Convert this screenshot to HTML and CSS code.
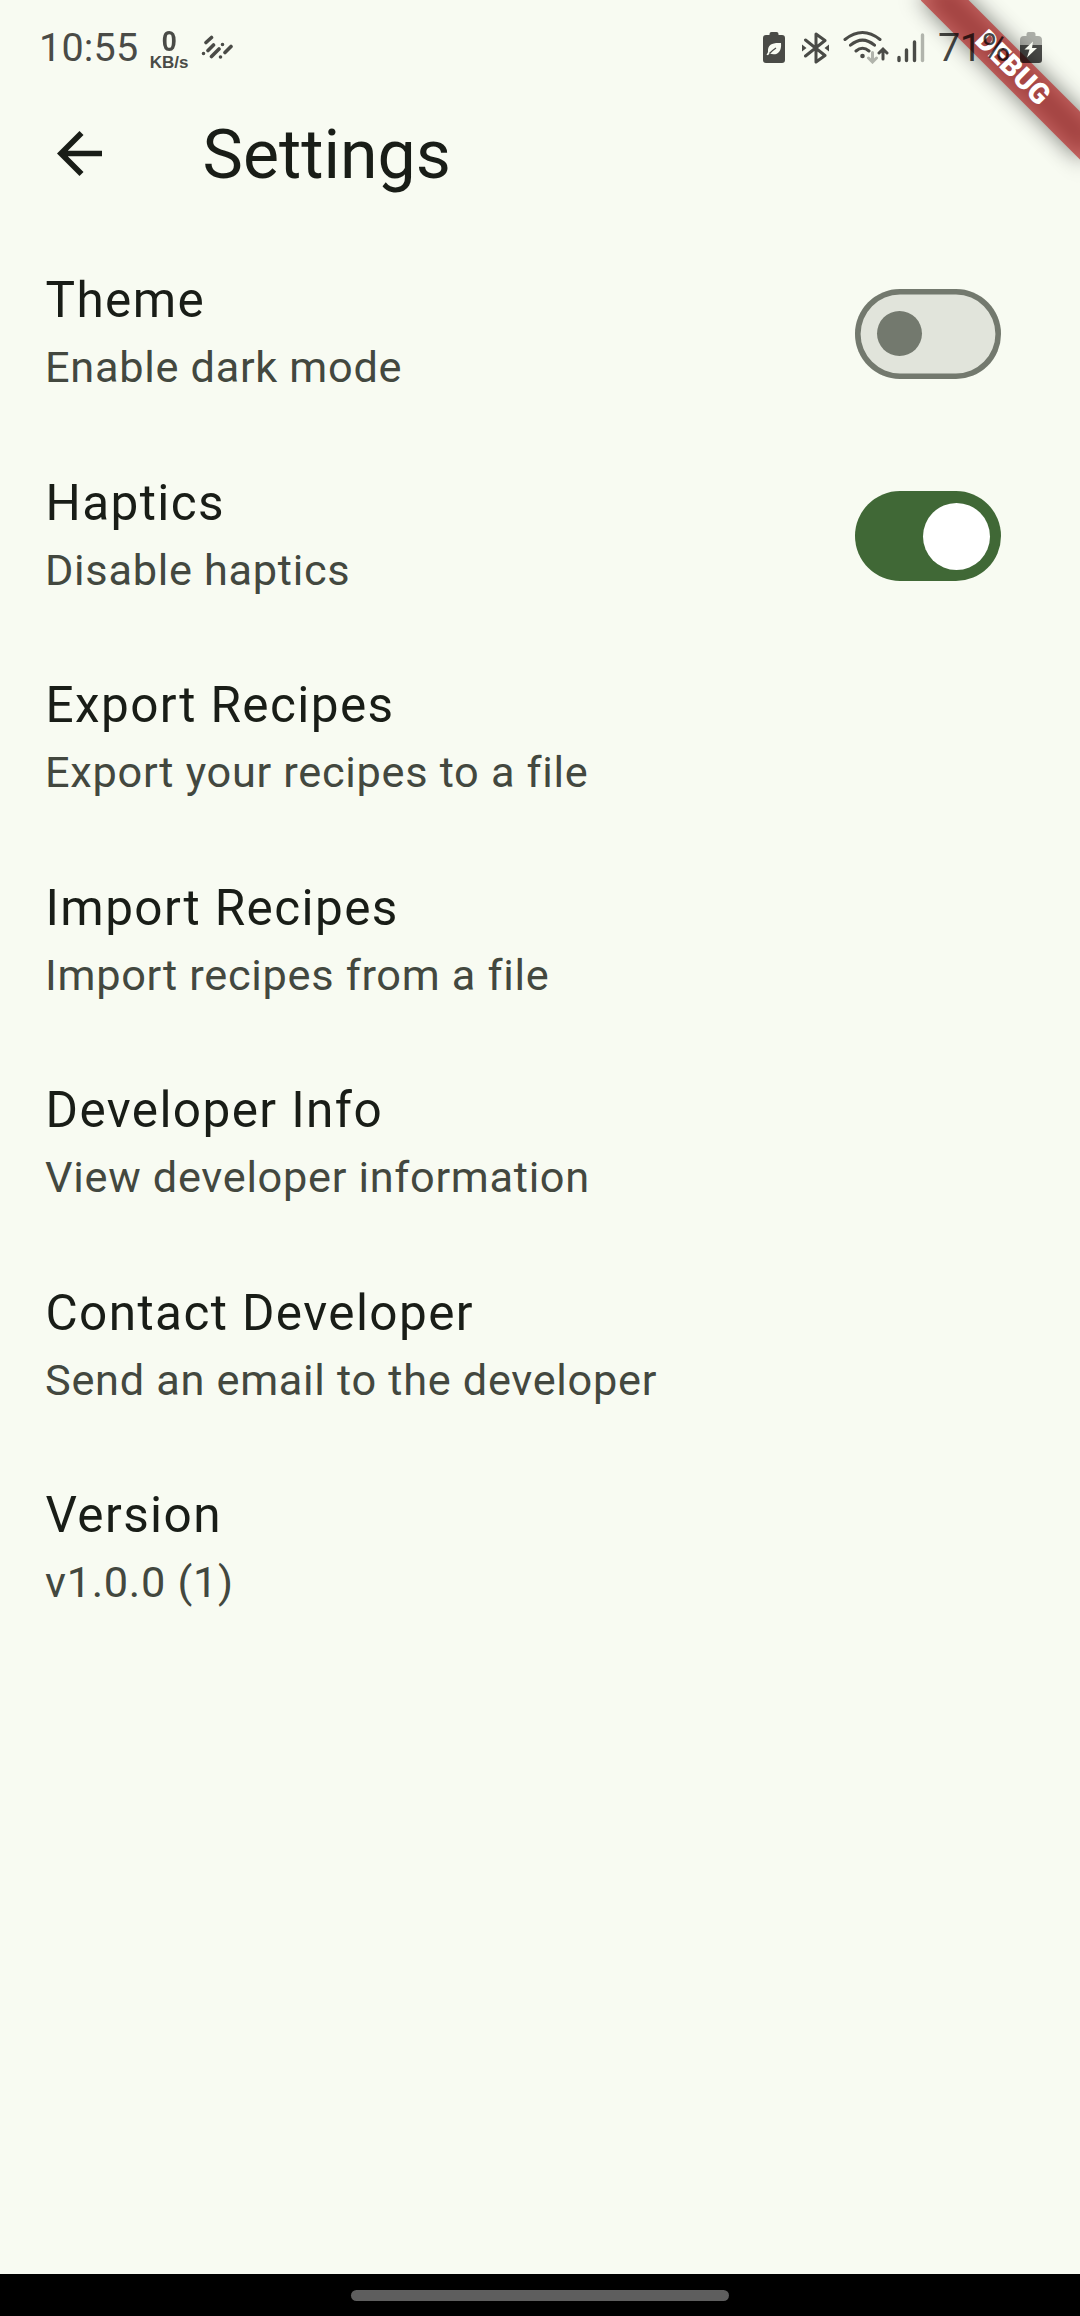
FILE: index.html
```html
<!DOCTYPE html>
<html lang="en">
<head>
<meta charset="utf-8">
<title>Settings</title>
<link rel="stylesheet" href="styles.css">
</head>
<body>
<div class="screen">
  <div class="debug-clip">
    <div class="debug-shadow"></div>
    <div class="debug-ribbon">DEBUG</div>
  </div>

  <header class="status-bar">
    <div class="status-left">
      <span class="clock">10:55</span>
      <span class="net-speed"><span class="net-value">0</span><span class="net-unit">KB/s</span></span>
      <svg class="icon-stripes" width="32" height="26" viewBox="0 0 32 26" fill="none" stroke="#4a4b47" stroke-width="3.600" stroke-linecap="round">
        <path d="M5 7.500 10.500 2.500M7 15.500 12.500 10M10.500 21.500 18 14M24 17.500 30 11.500M2.500 18.500h.01M21.500 9.500h.01M19.500 22h.01"/>
      </svg>
    </div>
    <div class="status-right">
      <svg class="icon-saver" width="22" height="31" viewBox="0 0 22 31">
        <path fill="#4a4b47" d="M6.500 3V2Q6.500 0 8.500 0h5q2 0 2 2v1H19q3 0 3 3v22q0 3-3 3H3q-3 0-3-3V6q0-3 3-3z"/>
        <path fill="#f8fbf2" d="M18 11C10 10.500 4.500 12 5 19.500c0 1.500-1 2-1.500 3.200l1.500.6 1.500-1.800C13 24 19 21 18 11z"/>
        <path fill="none" stroke="#4a4b47" stroke-width="1.300" d="M6.500 21.500Q8.500 19 13 16"/>
      </svg>
      <svg class="icon-bluetooth" width="27" height="32" viewBox="0 0 27 32">
        <path fill="none" stroke="#4a4b47" stroke-width="3" stroke-linejoin="round" stroke-linecap="round" d="M3.500 8 23 23.500 14 30V2l9 6.500L3.500 24"/>
        <path fill="#4a4b47" d="M0 12.500 4.500 16 0 19.500zM27 12.500 22.500 16 27 19.500z"/>
      </svg>
      <svg class="icon-wifi" width="46" height="34" viewBox="0 0 46 34" fill="none" stroke-linecap="round" stroke-width="3" stroke="#4a4b47">
        <path d="M2 9.500Q19.500-4.500 37 9.500M7.500 15.200Q19.500 5 31.500 15.200M13 21Q19.500 15.500 26 21"/>
        <circle cx="19.500" cy="26" r="2.300" fill="#4a4b47" stroke="none"/>
        <path stroke="#b1b4ac" d="M29.500 22.500v9M25.500 28l4 4 4-4"/>
        <path d="M40 29v-9M36 23l4-4 4 4"/>
      </svg>
      <svg class="icon-signal" width="28" height="30" viewBox="0 0 28 30" fill="none" stroke-linecap="round" stroke-width="3.400" stroke="#4a4b47">
        <path d="M2 24.500v3M9.500 17v10.500M17.500 9v18.500"/><path stroke="#b1b4ac" d="M25.500 2v25.500"/>
      </svg>
      <span class="battery-level">71%</span>
      <svg class="icon-battery" width="22" height="32" viewBox="0 0 22 32">
        <path fill="#000" fill-opacity=".3" d="M6.500 4V2Q6.500 0 8.500 0h5q2 0 2 2v2H18q4 0 4 4v5H0V8q0-4 4-4z"/>
        <path fill="#000" fill-opacity=".7" d="M0 13h22v15q0 3-3 3H3q-3 0-3-3z"/>
        <path fill="#f8fbf2" d="M13 9.500 4.500 17.500h5L7 25.500l10-9.500h-5z"/>
      </svg>
    </div>
  </header>

  <div class="app-bar">
    <svg class="back" width="45" height="45" viewBox="160 -800 640 640"><path fill="#191d17" d="m313-440 224 224-57 56-320-320 320-320 57 56-224 224h487v80H313Z"/></svg>
    <h1 class="page-title">Settings</h1>
  </div>

  <main class="list">
    <div class="row"><div class="texts"><div class="title">Theme</div><div class="sub">Enable dark mode</div></div><div class="switch off"><span class="thumb"></span></div></div>
    <div class="row"><div class="texts"><div class="title">Haptics</div><div class="sub">Disable haptics</div></div><div class="switch on"><span class="thumb"></span></div></div>
    <div class="row"><div class="texts"><div class="title">Export Recipes</div><div class="sub">Export your recipes to a file</div></div></div>
    <div class="row"><div class="texts"><div class="title">Import Recipes</div><div class="sub">Import recipes from a file</div></div></div>
    <div class="row"><div class="texts"><div class="title">Developer Info</div><div class="sub">View developer information</div></div></div>
    <div class="row"><div class="texts"><div class="title">Contact Developer</div><div class="sub">Send an email to the developer</div></div></div>
    <div class="row"><div class="texts"><div class="title">Version</div><div class="sub">v1.0.0 (1)</div></div></div>
  </main>

  <footer class="nav-bar"><span class="handle"></span></footer>
</div>
</body>
</html>
```

FILE: styles.css
```css
* { box-sizing: border-box; }
body { margin: 0; background: #f8fbf2; font-family: Roboto, "Liberation Sans", sans-serif; }
.screen { position: relative; width: 1080px; height: 2316px; overflow: hidden; display: flex; flex-direction: column; color: #191d17; }

.status-bar { position: relative; z-index: 2; height: 75px; flex: none; display: flex; justify-content: space-between; padding: 0 38px 0 39px; color: #4a4b47; }
.status-left, .status-right { display: flex; align-items: flex-start; }
.clock, .battery-level { font-size: 39.5px; line-height: 46px; margin-top: 25px; font-weight: 400; letter-spacing: .2px; }
.clock { width: 98px; }
.net-speed { display: flex; flex-direction: column; align-items: center; width: 40px; margin: 27px 0 0 12px; font-family: "Liberation Sans", sans-serif; font-weight: 700; }
.net-value { font-size: 30px; line-height: 27px; transform: scaleX(.9); }
.net-unit { font-size: 17px; line-height: 17px; }
.icon-stripes { margin: 35px 0 0 12px; }
.icon-saver { margin: 32px 17px 0 0; }
.icon-bluetooth { margin: 32px 14px 0 0; }
.icon-wifi { margin: 30px 8px 0 0; }
.icon-signal { margin: 33px 13px 0 0; }
.battery-level { width: 78px; letter-spacing: -.4px; color: rgba(0, 0, 0, .72); }
.icon-battery { margin: 32px 0 0 4px; }

.debug-clip { position: absolute; z-index: 1; top: 0; right: 0; width: 240px; height: 240px; overflow: hidden; }
.debug-shadow, .debug-ribbon { position: absolute; left: 60px; top: 51px; width: 225px; height: 33.75px; transform: rotate(45deg); }
.debug-shadow { background: rgba(0, 0, 0, .5); filter: blur(11px); }
.debug-ribbon { background: rgba(183, 28, 28, .627); color: #fff; font-size: 28.7px; line-height: 33.75px; font-weight: 900; text-align: center; }

.app-bar { flex: none; height: 157.5px; display: flex; align-items: center; padding-left: 56.5px; }
.back { flex: none; margin-right: 101px; }
.page-title { margin: 2px 0 0; font-size: 68px; line-height: 80px; font-weight: 400; }

.list { flex: 1; }
.row { height: 202.5px; display: flex; align-items: center; justify-content: space-between; padding: 0 78.75px 0 45px; }
.texts { padding-bottom: 4px; }
.title { font-size: 49.5px; line-height: 73px; letter-spacing: 1.4px; padding-left: .5px; }
.sub { font-size: 43.3px; line-height: 62px; letter-spacing: .7px; color: #43483f; }
.switch { width: 146.25px; height: 90px; border-radius: 45px; display: flex; align-items: center; }
.off { background: #e1e4db; box-shadow: inset 0 0 0 5.6px #73796e; padding-left: 22.2px; }
.on { background: #406836; justify-content: flex-end; padding-right: 11.25px; }
.thumb { border-radius: 50%; }
.off .thumb { width: 45px; height: 45px; background: #73796e; }
.on .thumb { width: 67.5px; height: 67.5px; background: #fff; }

.nav-bar { flex: none; height: 42px; background: #000; display: flex; justify-content: center; padding-top: 16px; }
.handle { width: 378px; height: 11px; border-radius: 5.5px; background: #5e5e5e; }
```
